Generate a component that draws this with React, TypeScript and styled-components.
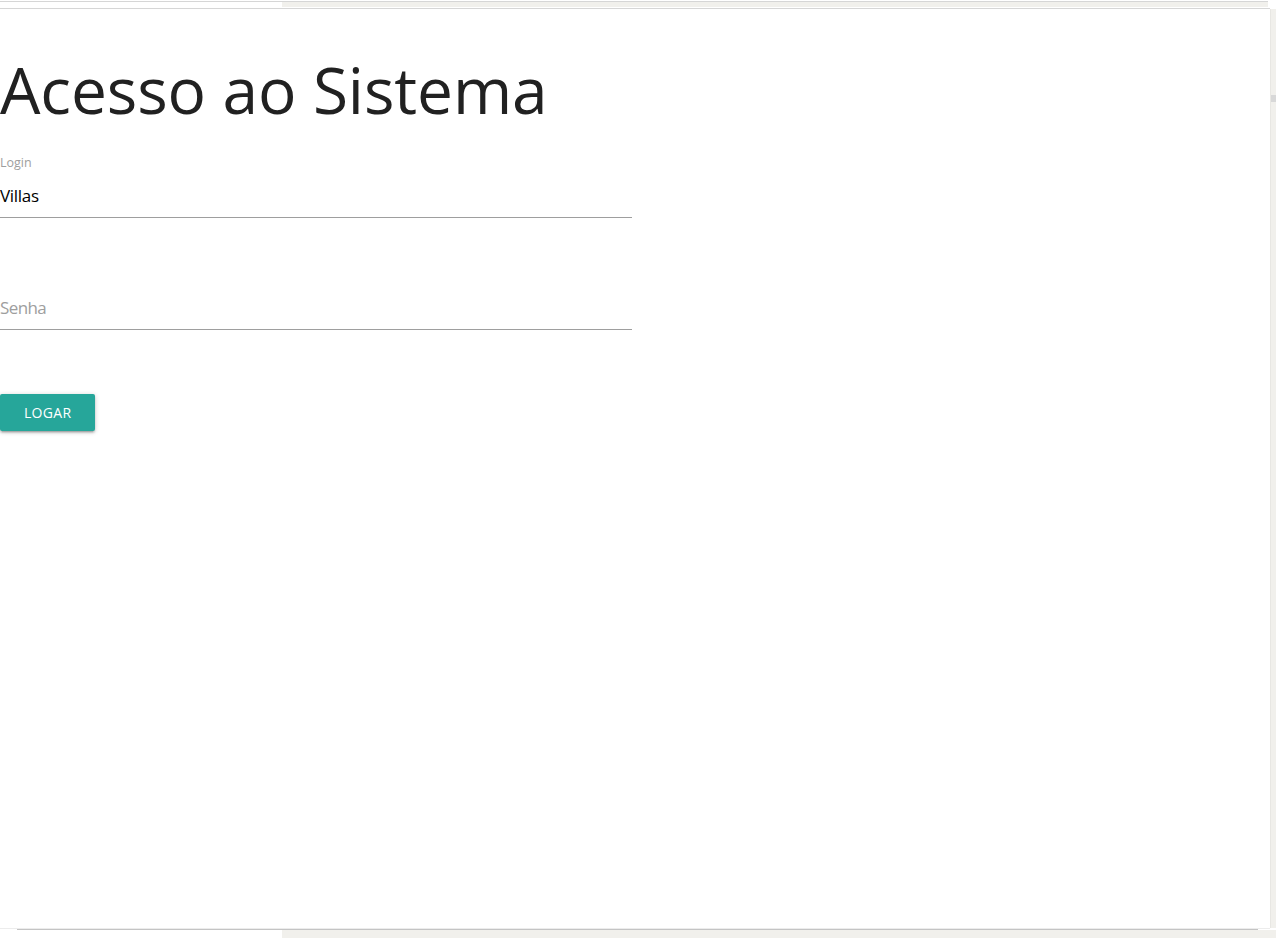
import React from "react";
import styled, { createGlobalStyle } from "styled-components";

const Global = createGlobalStyle`
  html, body { margin: 0; padding: 0; background: #ffffff; }
  body { font-family: "Open Sans", "Noto Sans", sans-serif; overflow: hidden; }
  * { box-sizing: border-box; }
`;

const Window = styled.div`
  width: 1276px;
  height: 938px;
  display: flex;
  flex-direction: column;
  background: #ffffff;
`;

const TopStrip = styled.div`
  height: 9px;
  display: flex;
  flex-direction: column;
  flex: none;
`;

const Rule = styled.div<{ $w: number; $color?: string; $offset?: number }>`
  height: 1px;
  width: ${(p) => p.$w}px;
  margin-left: ${(p) => p.$offset ?? 0}px;
  background: ${(p) => p.$color ?? "#d6d6d6"};
  flex: none;
`;

const Band = styled.div<{ $h: number; $w: number }>`
  height: ${(p) => p.$h}px;
  width: ${(p) => p.$w}px;
  display: flex;
  flex: none;
`;

const BandBlank = styled.div<{ $w: number }>`
  width: ${(p) => p.$w}px;
  background: #ffffff;
`;

const BandTint = styled.div`
  flex: 1;
  background: #f1f0ec;
`;

const Middle = styled.div`
  flex: 1;
  display: flex;
  min-height: 0;
`;

const Content = styled.main`
  flex: 1;
  background: #ffffff;
  padding-top: 45px;
`;

const Gutter = styled.div`
  width: 6px;
  background: #f1f0ec;
  border-left: 1px solid #e8e7e3;
  display: flex;
  flex-direction: column;
  padding-top: 86px;
`;

const GutterNotch = styled.div`
  height: 7px;
  background: #d8d8d8;
`;

const BottomStrip = styled.div`
  height: 10px;
  flex: none;
  display: flex;
  flex-direction: column;
  background: #ffffff;
`;

const Title = styled.h1`
  margin: 0;
  font-family: "Open Sans", "Noto Sans", sans-serif;
  font-weight: 400;
  font-size: 64px;
  line-height: 72px;
  color: #212121;
  letter-spacing: -0.1px;
`;

const Form = styled.form`
  width: 632px;
  display: flex;
  flex-direction: column;
  margin-top: 30px;
`;

const Field = styled.div<{ $gap: number }>`
  display: flex;
  flex-direction: column;
  margin-top: ${(p) => p.$gap}px;
`;

const Label = styled.label`
  font-size: 12.5px;
  line-height: 14px;
  color: #9e9e9e;
  margin-bottom: 3px;
`;

const Input = styled.input`
  height: 45px;
  width: 100%;
  border: none;
  border-bottom: 1px solid #9e9e9e;
  padding: 0;
  margin: 0;
  outline: none;
  font-family: "Open Sans", "Noto Sans", sans-serif;
  font-size: 17px;
  color: #000000;
  background: transparent;
  letter-spacing: -0.3px;
  &::placeholder { color: #9e9e9e; letter-spacing: -0.6px; }
`;

const Button = styled.button`
  align-self: flex-start;
  margin-top: 64px;
  height: 37px;
  padding: 0 24px;
  border: none;
  border-radius: 2px;
  background: #26a69a;
  color: #ffffff;
  font-family: "Open Sans", "Noto Sans", sans-serif;
  font-size: 14px;
  letter-spacing: 0.3px;
  text-transform: uppercase;
  box-shadow: 0 2px 2px 0 rgba(0,0,0,0.14), 0 3px 1px -2px rgba(0,0,0,0.12), 0 1px 5px 0 rgba(0,0,0,0.2);
  cursor: pointer;
`;

export default function App() {
  return (
    <>
      <Global />
      <Window>
        <TopStrip>
          <Rule $w={1276} $color="#ffffff" />
          <Rule $w={1268} />
          <Band $h={5} $w={1268}>
            <BandBlank $w={282} />
            <BandTint />
          </Band>
          <Rule $w={1270} $color="#ffffff" />
          <Rule $w={1270} />
        </TopStrip>
        <Middle>
          <Content>
            <Title>Acesso ao Sistema</Title>
            <Form onSubmit={(e) => e.preventDefault()}>
              <Field $gap={0}>
                <Label htmlFor="login">Login</Label>
                <Input id="login" type="text" defaultValue="Villas" />
              </Field>
              <Field $gap={67}>
                <Input id="senha" type="password" placeholder="Senha" />
              </Field>
              <Button type="submit">Logar</Button>
            </Form>
          </Content>
          <Gutter>
            <GutterNotch />
          </Gutter>
        </Middle>
        <BottomStrip>
          <Rule $w={1270} $color="#ececec" />
          <Rule $w={1241} $offset={17} $color="#c4c4c4" />
          <Band $h={8} $w={1276}>
            <BandBlank $w={282} />
            <BandTint />
          </Band>
        </BottomStrip>
      </Window>
    </>
  );
}
